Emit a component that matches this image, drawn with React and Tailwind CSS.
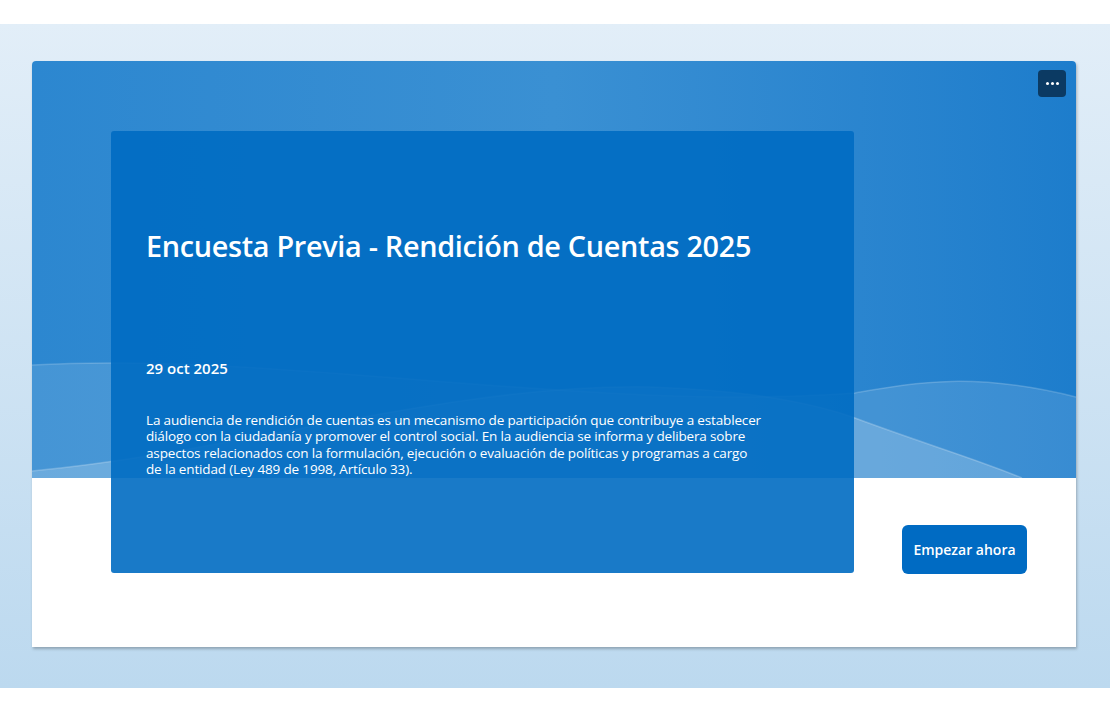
import React from "react";

function Waves() {
  return (
    <svg className="absolute inset-0 w-full h-full" viewBox="0 0 1044 417" preserveAspectRatio="none">
      <path
        d="M0,304 C250,290 560,352 823,332 C880,322 940,310 1044,336 L1044,417 L0,417 Z"
        fill="#ffffff"
        fillOpacity="0.12"
      />
      <path
        d="M0,304 C250,290 560,352 823,332 C880,322 940,310 1044,336"
        fill="none"
        stroke="#ffffff"
        strokeOpacity="0.18"
        strokeWidth="1.5"
      />
      <path
        d="M0,410 C200,392 420,322 620,326 C730,330 790,345 823,357 C890,382 950,400 990,417 L0,417 Z"
        fill="#ffffff"
        fillOpacity="0.2"
      />
      <path
        d="M0,410 C200,392 420,322 620,326 C730,330 790,345 823,357 C890,382 950,400 990,417"
        fill="none"
        stroke="#ffffff"
        strokeOpacity="0.22"
        strokeWidth="1.5"
      />
    </svg>
  );
}

export default function App() {
  return (
    <div className="w-[1110px] h-[712px] bg-white py-[24px]" style={{ fontFamily: '"Open Sans", "Noto Sans", sans-serif' }}>
      <div className="h-[664px] bg-gradient-to-b from-[#e2eef8] to-[#bcd9ef] pt-[37px] px-[32px]">
        <div className="relative w-[1044px] h-[586px] bg-white rounded-t-[4px] shadow-[1px_2px_3px_rgba(0,0,0,0.25)] overflow-hidden">
          <div className="absolute left-0 top-0 w-full h-[417px] bg-gradient-to-r from-[#2c87d0] via-[#3a90d3] to-[#1d7dcc]">
            <Waves />
          </div>
          <button className="absolute right-[10px] top-[9px] w-[28px] h-[27px] rounded-[4px] bg-[#0b3a63] flex items-center justify-center gap-[2px]">
            <span className="w-[3px] h-[3px] rounded-full bg-white" />
            <span className="w-[3px] h-[3px] rounded-full bg-white" />
            <span className="w-[3px] h-[3px] rounded-full bg-white" />
          </button>
          <div className="relative flex items-end pt-[70px] pl-[79px] pr-[49px]">
            <div className="w-[743px] h-[442px] rounded-[3px] bg-[rgba(0,108,194,0.9)] text-white px-[35px] pt-[95px]">
              <h1 className="text-[28.8px] leading-[40px] font-semibold tracking-[-0.3px]">
                Encuesta Previa - Rendición de Cuentas 2025
              </h1>
              <div className="mt-[91px] text-[15px] leading-[22px] font-semibold">29 oct 2025</div>
              <p className="mt-[33px] w-[660px] text-[13.5px] leading-[16.3px] tracking-[-0.15px]">
                La audiencia de rendición de cuentas es un mecanismo de participación que contribuye a establecer
                <br />
                diálogo con la ciudadanía y promover el control social. En la audiencia se informa y delibera sobre
                <br />
                aspectos relacionados con la formulación, ejecución o evaluación de políticas y programas a cargo
                <br />
                de la entidad (Ley 489 de 1998, Artículo 33).
              </p>
            </div>
            <button className="ml-auto mb-[-1px] w-[125px] h-[49px] rounded-[6px] bg-[#006bc3] text-white text-[14px] font-semibold">
              Empezar ahora
            </button>
          </div>
        </div>
      </div>
    </div>
  );
}
